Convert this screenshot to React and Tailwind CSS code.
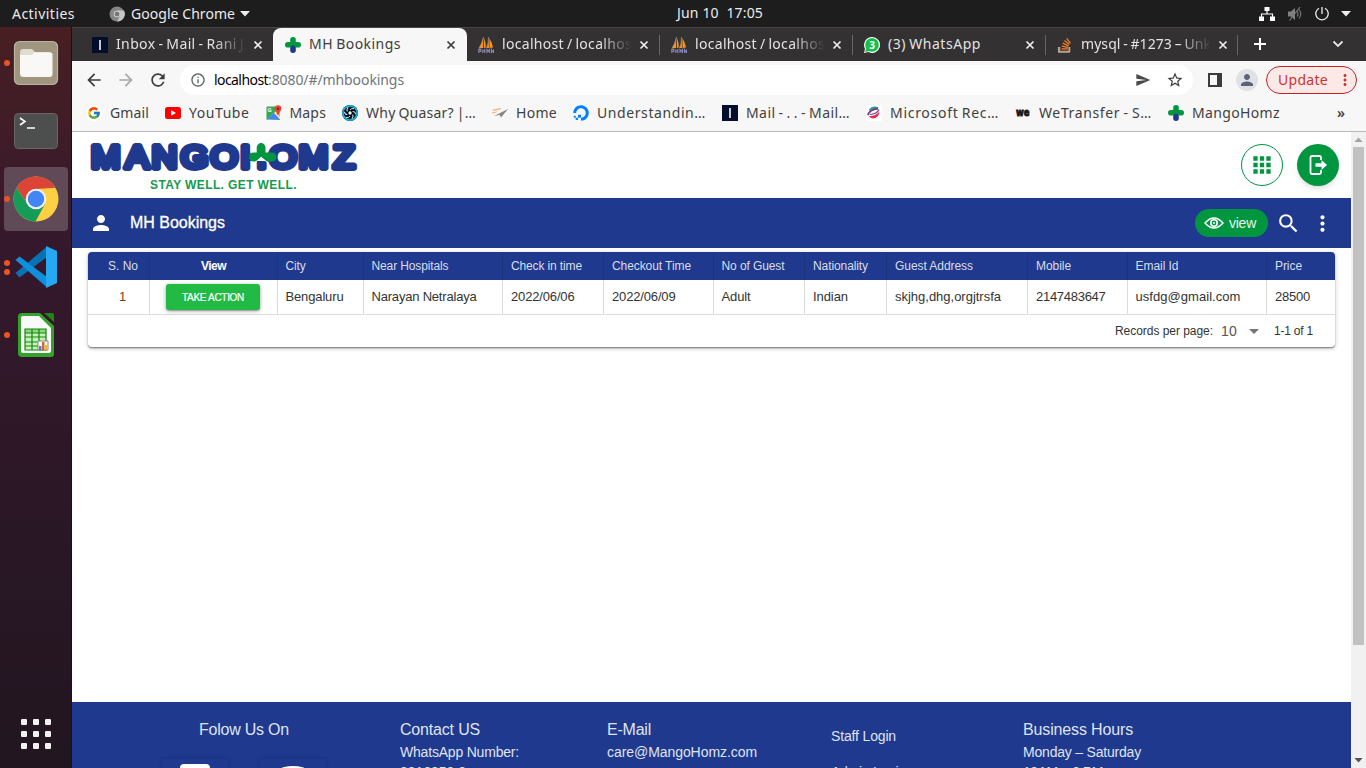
import React, { useLayoutEffect, useRef, useState } from "react";
import { FcGoogle } from "react-icons/fc";
import { FaStackOverflow, FaDigitalOcean } from "react-icons/fa";
import { MdPerson, MdSearch, MdMoreVert, MdApps, MdArrowBack, MdArrowForward, MdRefresh, MdInfoOutline, MdStarBorder, MdSend, MdArrowDropDown } from "react-icons/md";

/* A single line of text whose tracking is adjusted to fill a fixed width. */
function Fit({ w, children, className = "" }) {
  const ref = useRef(null);
  const [ls, setLs] = useState(0);
  useLayoutEffect(() => {
    const natural = ref.current.getBoundingClientRect().width;
    setLs((w - natural) / String(children).length);
  }, []);
  return (
    <span className={"block shrink-0 whitespace-pre " + className} style={{ width: w }}>
      <span ref={ref} className="inline-block" style={{ letterSpacing: ls }}>{children}</span>
    </span>
  );
}

const MangoIcon = () => (
  <svg width="16" height="16" viewBox="0 0 16 16" className="shrink-0">
    <rect x="5.2" y="0" width="5.6" height="10" rx="2.8" fill="#009640" />
    <rect x="0" y="5" width="16" height="5.6" rx="2.8" fill="#009640" />
    <path d="M5.2 10.5 8 8l2.8 2.5v2.7a2.8 2.8 0 0 1-5.6 0z" fill="#1f398f" />
  </svg>
);
const MailIcon = () => (
  <svg width="16" height="16" className="shrink-0"><rect width="16" height="16" fill="#020e2b" /><path d="M8 3v10" stroke="#c8cad2" strokeWidth="2" /></svg>
);
const BoatIcon = () => (
  <svg width="16" height="16" viewBox="0 0 16 16" className="shrink-0">
    <path d="M5.500 0Q4 7 .8 11.500L5 11zM6.200 1Q8 6 7.800 10.500L5.800 11zM10.500 0Q10.500 7 8.500 11h2.500zM11.300 1q3 5 3.700 9.500l-3.500.5z" fill="#f7931e" />
    <path d="M5.500 0Q4 7 .8 11.500M10.500 0Q10.500 7 8.500 11" fill="none" stroke="#9a8f85" strokeWidth=".8" />
    <path d="M.8 16v-3.500h2v2h-2m4-2V16m0-2h2v-2M6.800 16v-3.500M9 16v-3.500l1.200 1.500 1.200-1.500V16m2 0v-3.500L15.500 16v-3.500" fill="none" stroke="#8588b5" strokeWidth="1.100" />
  </svg>
);
const WhatsIcon = () => (
  <svg width="16" height="16" viewBox="0 0 16 16" className="shrink-0">
    <path d="M8 0a8 8 0 1 1-3.600 15.100L0 16l1-4.200A8 8 0 0 1 8 0z" fill="#fff" />
    <circle cx="8" cy="7.900" r="6.800" fill="#12c04b" />
    <path d="M1 15l1.300-4 3 3z" fill="#12c04b" />
    <text x="8" y="11.500" textAnchor="middle" fontSize="10" fontWeight="700" fontFamily="Open Sans, sans-serif" fill="#fff">3</text>
  </svg>
);
const MapsIcon = () => (
  <svg width="16" height="16" viewBox="0 0 16 16" className="shrink-0">
    <rect x=".5" y="1.500" width="13.500" height="13.500" rx="1" fill="#34a853" />
    <path d="M1 15 14 2v12z" fill="#e8eaed" /><path d="M1 14.500 8 8l6 6.500z" fill="#4285f4" /><path d="M10 8l4 4V6z" fill="#fbbc04" />
    <text x="1.500" y="7" fontSize="6" fontWeight="700" fontFamily="Roboto, sans-serif" fill="#fff">G</text>
    <path d="M12 .3a3.400 3.400 0 0 1 3.400 3.400C15.400 6 13 7 12 11 11 7 8.600 6 8.600 3.700A3.400 3.400 0 0 1 12 .3z" fill="#ea4335" /><circle cx="12" cy="3.700" r="1.200" fill="#8c1a11" />
  </svg>
);
const YoutubeIcon = () => (
  <svg width="16" height="16" viewBox="0 0 16 16" className="shrink-0"><rect y="2" width="16" height="12" rx="2.500" fill="#f00" /><path d="M6.200 5.300v5.400L11 8z" fill="#fff" /></svg>
);
const QuasarIcon = () => (
  <svg width="16" height="16" viewBox="0 0 16 16" className="shrink-0">
    <circle cx="8" cy="8" r="8" fill="#050a0e" /><circle cx="8" cy="8" r="7.100" fill="none" stroke="#12b5e8" strokeWidth="1.700" />
    <circle cx="8" cy="8" r="1.700" fill="#e6f6fc" />
    <g fill="none" stroke="#c3e9f5" strokeWidth="1">{[0, 60, 120, 180, 240, 300].map((a) => <path key={a} d="M8 5Q9 3 12 3.600" transform={`rotate(${a} 8 8)`} />)}</g>
  </svg>
);
const HomeIcon = () => (
  <svg width="16" height="16" viewBox="0 0 16 16" className="shrink-0"><path d="M1 4.500 9.500 3l-1 1.500L.5 6zM0 7.500l5.500-1.200-1 1.200L0 8.700z" fill="#f5b469" /><path d="M16 4 2 11l5-1zM16 4 7.500 9.500 9 12.500z" fill="#858585" /></svg>
);
const MicrosoftIcon = () => (
  <svg width="16" height="16" viewBox="0 0 16 16" className="shrink-0"><rect width="16" height="16" fill="#fff" />
    <path d="M3.500 5.500Q6.500 1 12 3.200" fill="none" stroke="#2a9f98" strokeWidth="1.800" />
    <path d="M12 3.500C7 4 2 6.500 2.200 10.200" fill="none" stroke="#713d91" strokeWidth="1.800" />
    <path d="M4 9.500Q11 9 13 4.500" fill="none" stroke="#713d91" strokeWidth="1.200" />
    <path d="M3 11q6 .5 10.500-4.500-.5 6-6 7-3 0-4.500-2.500z" fill="#e52b4e" />
  </svg>
);
const WeIcon = () => (
  <svg width="16" height="16" viewBox="0 0 16 16" className="shrink-0"><text x="1" y="11" textLength="13.500" lengthAdjust="spacingAndGlyphs" fontSize="10" fontWeight="700" stroke="#17181a" strokeWidth=".9" fontFamily="DejaVu Sans, sans-serif" fill="#17181a">we</text></svg>
);
const Close = ({ dark }) => (
  <svg width="10" height="10" viewBox="0 0 10 10" className="shrink-0"><path d="M1.500 1.500l7 7m0-7l-7 7" stroke={dark ? "#3c3c3c" : "#eee"} strokeWidth="1.700" /></svg>
);

function Tab({ icon, text, w, fade, active, sep, className }) {
  return (
    <div className={"flex h-[33px] shrink-0 items-center " + className + (active ? " rounded-t-lg bg-[#f7f7f7] text-[#3c3c3c]" : " text-[#e3e3e3]")}>
      {icon}
      <div className={"mb-[2px] ml-2 w-[137px] shrink-0 overflow-hidden" + (fade ? " [mask-image:linear-gradient(90deg,#000_98px,transparent_130px)]" : "")}><Fit w={w} className="leading-5">{text}</Fit></div>
      <Close dark={active} />
      {sep && <div className="ml-auto h-5 w-px bg-[#666]" />}
    </div>
  );
}

const marks = [
  [<span className="flex size-4 shrink-0 items-center justify-center rounded-full bg-white"><FcGoogle size={14} /></span>, "Gmail", 39],
  [<YoutubeIcon />, "YouTube", 60.5], [<MapsIcon />, "Maps", 36.5], [<QuasarIcon />, "Why Quasar? |…", 110],
  [<HomeIcon />, "Home", 41], [<FaDigitalOcean size={16} color="#0080ff" className="shrink-0" />, "Understandin…", 109],
  [<MailIcon />, "Mail - . . - Mail…", 104], [<MicrosoftIcon />, "Microsoft Rec…", 109], [<WeIcon />, "WeTransfer - S…", 113], [<MangoIcon />, "MangoHomz", 88],
];

function Browser() {
  return (
    <div className="shrink-0 font-['Noto_Sans',sans-serif] text-[14px] [word-spacing:-1px]">
      <div className="flex h-[34px] border-t border-[#484646] bg-[#343132]">
        <Tab className="w-[201px] pl-5" icon={<MailIcon />} text="Inbox - Mail - Rani J" w={128} fade />
        <Tab className="w-[194px] pl-3" icon={<MangoIcon />} text="MH Bookings" w={92} active />
        <Tab className="w-[193px] pl-[11px]" icon={<BoatIcon />} text="localhost / localhos" w={130} fade sep />
        <Tab className="w-[193px] pl-[11px]" icon={<BoatIcon />} text="localhost / localhos" w={130} fade sep />
        <Tab className="w-[193px] pl-[11px]" icon={<WhatsIcon />} text="(3) WhatsApp" w={93} sep />
        <Tab className="w-[192px] pl-[11px]" icon={<span className="relative size-4 shrink-0"><FaStackOverflow size={16} color="#f48024" /><svg width="16" height="16" className="absolute inset-0"><path d="M1.700 10v5h10.500v-5" fill="none" stroke="#aaa" strokeWidth="1.500" /></svg></span>} text="mysql - #1273 – Unk" w={130} fade sep />
        <svg width="12" height="12" className="mt-[10px] ml-4"><path d="M6 0v12M0 6h12" stroke="#fff" strokeWidth="2" /></svg>
        <svg width="12" height="12" className="mt-[10px] ml-[66px]"><path d="M1.500 3.500 6 8l4.500-4.500" fill="none" stroke="#e5e5e5" strokeWidth="1.800" /></svg>
      </div>
      <div className="flex h-[38px] items-center bg-[#f7f7f7] pl-3">
        <MdArrowBack size={20} color="#3c3c3c" />
        <MdArrowForward size={20} color="#a8a8a8" className="ml-3" />
        <MdRefresh size={20} color="#3c3c3c" className="ml-3" />
        <div className="ml-3 flex h-[30px] w-[1013px] items-center rounded-full bg-white pl-[10px]">
          <MdInfoOutline size={16} color="#5f6368" />
          <div className="mb-[2px] ml-2 flex"><Fit w={54} className="text-black">localhost</Fit><Fit w={136} className="text-[#70757a]">:8080/#/mhbookings</Fit></div>
          <MdSend size={16} color="#4a4a4a" className="ml-auto" />
          <MdStarBorder size={18} color="#3c3c3c" className="mr-[9px] ml-[15px]" />
        </div>
        <svg width="14" height="14" className="ml-[15px]"><path d="M1 1h12v12H1z" fill="none" stroke="#3c3c3c" strokeWidth="2" /><path d="M9 0h5v14H9z" fill="#3c3c3c" /></svg>
        <div className="ml-[14px] flex size-[22px] items-center justify-center rounded-full bg-[#dee1e6] text-[#5a6478]"><MdPerson size={18} /></div>
        <div className="ml-2 flex h-7 w-[91px] items-center rounded-full border border-[#c5221f] bg-[#fbe9e8] pl-[11px] text-[#d0312b]"><Fit w={50} className="mb-[2px]">Update</Fit><MdMoreVert size={18} className="ml-2" /></div>
      </div>
      <div className="flex h-[33px] items-center gap-4 border-b border-[#b9b9b9] bg-[#f7f7f7] pb-[5px] pl-[14px] text-[#3f3f3f]">
        {marks.map(([icon, t, w]) => <div key={t} className="flex items-center gap-2">{icon}<Fit w={w} className="leading-5">{t}</Fit></div>)}
        <span className="ml-[41px] font-semibold">»</span>
      </div>
    </div>
  );
}

function Logo() {
  return (
    <svg width="274" height="54" viewBox="86 138 274 54" className="mt-[6px] ml-[14px] shrink-0">
      <g transform="scale(1.1 1)">
        <text y="168" x="96 124.700 149.500 176.800 203.900 230.500 257.300 285 312.700" textAnchor="middle" fontFamily="Liberation Sans, sans-serif" fontSize="32" fill="#1f398f" stroke="#1f398f" strokeWidth="6" strokeLinejoin="round" strokeLinecap="round">MANGOHOMZ</text>
      </g>
      <path d="M250.500 141H257v18h-6.500zM257 141h10v20h-10z" fill="#fff" />
      <path d="M256.700 147.500a4.400 4.400 0 0 1 8.800 0v5h6.500a4.500 4.500 0 0 1 0 9h-5.500l-5.300-4.500-5.300 4.500H253.500a4.500 4.500 0 0 1 0-9h3.200z" fill="#009640" />
      <path d="M255 162.500l6.200-5.200 6.200 5.200" fill="none" stroke="#fff" strokeWidth="1" />
      <text x="150" y="188.800" textLength="146.500" fontFamily="Liberation Sans, sans-serif" fontWeight="700" fontSize="12" fill="#169b4b">STAY WELL. GET WELL.</text>
    </svg>
  );
}

const cols = [
  ["w-[62px]", "S. No", 30, "1", 6, "pl-5", "pl-[31px] text-[#8a3a12]"], ["w-[128px]", "View", 25, null, 0, "pl-[51px] font-bold text-white", ""],
  ["w-[86px]", "City", 20, "Bengaluru", 58], ["w-[139px]", "Near Hospitals", 77, "Narayan Netralaya", 105],
  ["w-[101px]", "Check in time", 71, "2022/06/06", 63.5, "pl-2", "pl-2"], ["w-[110px]", "Checkout Time", 79, "2022/06/09", 63.5, "pl-2", "pl-2"],
  ["w-[91px]", "No of Guest", 63, "Adult", 29], ["w-[82px]", "Nationality", 55, "Indian", 35, "pl-2", "pl-2"],
  ["w-[141px]", "Guest Address", 78, "skjhg,dhg,orgjtrsfa", 106, "pl-2", "pl-2"], ["w-[100px]", "Mobile", 35, "2147483647", 69.5, "pl-2", "pl-2"],
  ["w-[139px]", "Email Id", 43, "usfdg@gmail.com", 105], ["w-[69px]", "Price", 27, "28500", 35, "pl-2", "pl-2"],
];

function Page() {
  return (
    <div className="flex min-h-0 flex-1 bg-white font-['Liberation_Sans',sans-serif]">
      <div className="flex w-[1279px] flex-col overflow-hidden">
        <header className="flex h-[66px] shrink-0 items-center">
          <div className="self-start"><Logo /></div>
          <div className="ml-auto flex size-[42px] items-center justify-center rounded-full border border-[#009640] text-[#009640]"><MdApps size={26} /></div>
          <div className="mr-3 ml-[14px] flex size-[42px] items-center justify-center rounded-full bg-[#009640] shadow-md">
            <svg width="24" height="24" viewBox="0 0 24 24"><path d="M15 7V4.500Q15 3 13.500 3H6Q4.500 3 4.500 4.500v15Q4.500 21 6 21h7.500Q15 21 15 19.500V17" fill="none" stroke="#fff" strokeWidth="1.800" /><path d="M9.500 10.200h6V7l5.500 5-5.500 5v-3.200h-6z" fill="#fff" /></svg>
          </div>
        </header>
        <div className="flex h-[50px] shrink-0 items-center bg-[#1f398f] pl-[17px] text-white">
          <MdPerson size={24} />
          <Fit w={95} className="ml-[17px] text-[16px] [-webkit-text-stroke:0.3px_white]">MH Bookings</Fit>
          <div className="ml-auto flex h-7 w-[73px] items-center rounded-full bg-[#009640] pl-[9px] text-[14px]">
            <svg width="20" height="12" viewBox="0 0 20 12"><path d="M1 6Q10-4 19 6 10 16 1 6z" fill="none" stroke="#fff" strokeWidth="1.500" /><circle cx="10" cy="6" r="3.200" fill="none" stroke="#fff" strokeWidth="1.600" /><circle cx="10" cy="6" r="1" fill="#fff" /></svg>
            <Fit w={27} className="ml-[5px] text-white/90">view</Fit>
          </div>
          <MdSearch size={25} className="ml-2" />
          <MdMoreVert size={25} className="mr-4 ml-[9px]" />
        </div>
        <div className="mt-1 ml-4 h-[95px] w-[1247px] shrink-0 overflow-hidden rounded bg-white text-[12px] shadow-[0_1px_5px_rgba(0,0,0,.2),0_2px_2px_rgba(0,0,0,.14),0_1px_1px_rgba(0,0,0,.3)]">
          <div className="flex h-7 bg-[#1f398f] text-[#d9ddeb]">
            {cols.map(([cw, h, w, , , pl]) => <div key={h} className={cw + " flex shrink-0 items-center border-r border-[#1b327d] last:border-0 " + (pl || "pl-[7.5px]")}><Fit w={w}>{h}</Fit></div>)}
          </div>
          <div className="flex h-[35px] border-b border-[#dcdcdc] text-[13px] text-[#333]">
            {cols.map(([cw, h, , v, w, , pl]) => (
              <div key={h} className={cw + " flex shrink-0 items-center border-r border-[#dcdcdc] last:border-0 " + (v ? pl || "pl-[7.5px]" : "pl-4")}>
                {v ? <Fit w={w}>{v}</Fit> : <div className="flex h-[26px] w-[94px] items-center justify-center rounded-[3px] bg-[#21ba45] text-[10px] text-white shadow-[0_1px_4px_rgba(0,0,0,.35),0_1px_1px_rgba(0,0,0,.2)]"><Fit w={62} className="[-webkit-text-stroke:0.2px_white]">TAKE ACTION</Fit></div>}
              </div>))}
          </div>
          <div className="flex h-8 items-center pl-[1027px] text-[#333]">
            <Fit w={98}>Records per page:</Fit><Fit w={16} className="ml-2 text-[14px] text-[#555]">10</Fit>
            <MdArrowDropDown size={24} color="#757575" className="ml-[5px]" /><Fit w={39} className="ml-2">1-1 of 1</Fit>
          </div>
        </div>
        <footer className="mt-auto flex h-[66px] shrink-0 overflow-hidden bg-[#1f398f] text-[14px] leading-[22px] text-[#dfe3f0]">
          <div className="w-[328px] shrink-0 pt-[17px]">
            <Fit w={90} className="ml-[127px] text-[16px]">Folow Us On</Fit>
            <div className="mt-[18px] ml-[90px] flex gap-8">
              <div className="flex h-[66px] w-[66px] justify-center pt-[5px] shadow-[0_0_5px_rgba(0,0,0,.2)]"><div className="h-10 w-[30px] rounded bg-white" /></div>
              <div className="flex h-[66px] w-[66px] justify-center pt-[7px] shadow-[0_0_5px_rgba(0,0,0,.2)]"><div className="h-9 w-[50px] rounded-[50%] bg-white" /></div>
            </div>
          </div>
          <div className="w-[207px] shrink-0 pt-[17px]"><Fit w={80} className="text-[16px]">Contact US</Fit><Fit w={119}>WhatsApp Number:</Fit><Fit w={66} className="-mt-[2px]">9916950 8</Fit></div>
          <div className="w-[224px] shrink-0 pt-[17px]"><Fit w={44} className="text-[16px]">E-Mail</Fit><Fit w={150}>care@MangoHomz.com</Fit></div>
          <div className="w-[192px] shrink-0 pt-[23px]"><Fit w={65}>Staff Login</Fit><Fit w={75} className="mt-[14px]">Admin Login</Fit></div>
          <div className="pt-[17px]"><Fit w={110} className="text-[16px]">Business Hours</Fit><Fit w={118}>Monday – Saturday</Fit><Fit w={80} className="-mt-[2px]">10AM – 6 PM</Fit></div>
        </footer>
      </div>
      <div className="flex w-[15px] shrink-0 flex-col items-center bg-[#f1f1f1]">
        <svg width="15" height="15"><path d="M3.500 10h8L7.500 5.500z" fill="#a3a3a3" /></svg>
        <div className="h-[498px] w-[11px] bg-[#c1c1c1]" />
        <svg width="15" height="15" className="mt-auto"><path d="M3.500 5h8l-4 4.500z" fill="#505050" /></svg>
      </div>
    </div>
  );
}

const Item = ({ dots = 1, children, active, className }) => (
  <div className={"flex h-16 w-16 shrink-0 items-center rounded " + className + (active ? " bg-[#604a58]" : "")}>
    <div className="flex w-[6px] flex-col gap-[3px]">{Array.from({ length: dots }, (_, i) => <div key={i} className="size-[6px] rounded-full bg-[#e95420]" />)}</div>
    <div className="ml-1 flex w-11 justify-center">{children}</div>
  </div>
);

function Dock() {
  return (
    <aside className="flex w-[72px] shrink-0 flex-col border-r border-[#1e0c17] bg-linear-to-b from-[#481f22] via-[#35182c] via-30% to-[#211620] pt-1 pl-1">
      <Item className="">
        <svg width="46" height="46" viewBox="0 0 46 46" className="shrink-0"><rect x="1.500" y="1.500" width="43" height="43" rx="5" fill="#a09680" stroke="#b9b3a3" strokeWidth="1.200" /><path d="M7 13q0-4 3-4h9l3 3h14q2 0 2 2v5H7z" fill="#dfdcd0" /><path d="M7 15h12l2-2.500h16.500q2 0 2 2V34q0 3-3 3H10.500Q7 37 7 33.500z" fill="#f9f8f6" /></svg>
      </Item>
      <Item className="mt-1" dots={0}>
        <svg width="46" height="38" viewBox="0 0 46 38" className="shrink-0"><rect x="1.500" y="1.500" width="43" height="35" rx="4" fill="#4d4e4e" stroke="#6a6665" /><path d="M7 6l5 3.500L7 13M14 16h8" fill="none" stroke="#fff" strokeWidth="1.600" /></svg>
      </Item>
      <Item className="mt-1" active>
        <svg width="46" height="46" viewBox="-23 -23 46 46" className="shrink-0">
          <circle r="22.500" fill="#fdd043" />
          <path d="M-19.500-11.200A22.500 22.500 0 0 1 19.500-11.200L0-10-8.700 5z" fill="#db4437" />
          <path d="M-19.500-11.200A22.500 22.500 0 0 0-.5 22.500L9 5-8.700 5z" fill="#149c58" />
          <circle r="10.300" fill="#f1f1f1" /><circle r="8.200" fill="#4285f4" />
        </svg>
      </Item>
      <Item className="mt-1" dots={2}>
        <svg width="44" height="44" viewBox="0 0 44 44" className="shrink-0"><path d="M1.500 28 5.500 32.500 33 12V1.500z" fill="#0871b4" /><path d="M1.500 15 5.500 11.500 33 32v10.500z" fill="#108fda" /><path d="M32 1l11 5v32l-11 5z" fill="#27a8f2" /></svg>
      </Item>
      <Item className="mt-1">
        <svg width="38" height="46" viewBox="0 0 38 46" className="shrink-0"><path d="M5 1h18l14 13v28q0 3-3 3H5q-4 0-4-4V5q0-4 4-4z" fill="#34a32a" /><path d="M27 1h8q2 0 2 2v7z" fill="#238512" /><path d="M6 4h16l12 12v23q0 2-2 2H6q-2 0-2-2V6q0-2 2-2z" fill="#fafafa" /><path d="M8 17h21v21H8z" fill="#c5f0bb" /><path d="M8 17h21v4H8z" fill="#89da7b" /><path d="M8 17h21v21H8zM15 17v21M22 17v21M8 21h21M8 25h21M8 30h21M8 34h21" fill="none" stroke="#16850b" strokeWidth="1.200" /><path d="M21 29h10v9H21z" fill="#fff" stroke="#888" /><path d="M22 34h2.500v4H22z" fill="#3b8cc9" /><path d="M25 30h2.500v8H25z" fill="#db6725" /><path d="M28 33h2.500v5H28z" fill="#f6b52c" /></svg>
      </Item>
      <div className="mt-auto mb-[19px] ml-[17px] grid grid-cols-[6px_6px_6px] gap-[6px]">{Array.from({ length: 9 }, (_, i) => <div key={i} className="size-[6px] rounded-[1px] bg-[#f4f2f0]" />)}</div>
    </aside>
  );
}

export default function App() {
  return (
    <div className="flex h-[768px] w-[1366px] flex-col overflow-hidden">
      <div className="flex h-[27px] shrink-0 items-center bg-[#1d1d1d] pl-3 font-['Noto_Sans',sans-serif] text-[14px] text-[#ebebeb]">
        <Fit w={63}>Activities</Fit>
        <svg width="16" height="16" viewBox="-8 -8 16 16" className="ml-[34px]"><circle r="7.500" fill="#858585" /><path d="M0-3.500h7A7.500 7.500 0 0 1 0 7.500L3 2z" fill="#c4c4c4" /><circle r="3.300" fill="#ddd" /><circle r="2.500" fill="#777" /></svg>
        <Fit w={104} className="ml-[6px]">Google Chrome</Fit>
        <svg width="10" height="6" className="ml-[5px]"><path d="M0 0h10L5 5.500z" fill="#eee" /></svg>
        <Fit w={86} className="mb-[2px] ml-[427px]">Jun 10  17:05</Fit>
        <svg width="16" height="14" viewBox="0 0 16 14" className="ml-[496px]"><path d="M5.500 0h5v4h-5zM0 9.500h5V14H0zM11 9.500h5V14h-5z" fill="#fff" /><path d="M8 4v3M2.500 10V7h11v3" fill="none" stroke="#fff" strokeWidth="1.200" /></svg>
        <svg width="15" height="14" viewBox="0 0 15 14" className="ml-[13px]"><path d="M0 4.500h3L7 1v12L3 9.500H0z" fill="#808080" /><path d="M9 4.500q2 2.500 0 5M11 2.500q3.500 4.500 0 9M1.500 13.500 12 0" fill="none" stroke="#777" strokeWidth="1.200" /></svg>
        <svg width="14" height="14" viewBox="0 0 14 14" className="ml-3"><path d="M7 0v7M4 1.200a6.200 6.200 0 1 0 6 0" fill="none" stroke="#eee" strokeWidth="1.300" /></svg>
        <svg width="10" height="6" className="ml-3"><path d="M0 0h10L5 5.500z" fill="#eee" /></svg>
      </div>
      <div className="flex min-h-0 flex-1">
        <Dock />
        <main className="flex w-[1294px] flex-col"><Browser /><Page /></main>
      </div>
    </div>
  );
}
